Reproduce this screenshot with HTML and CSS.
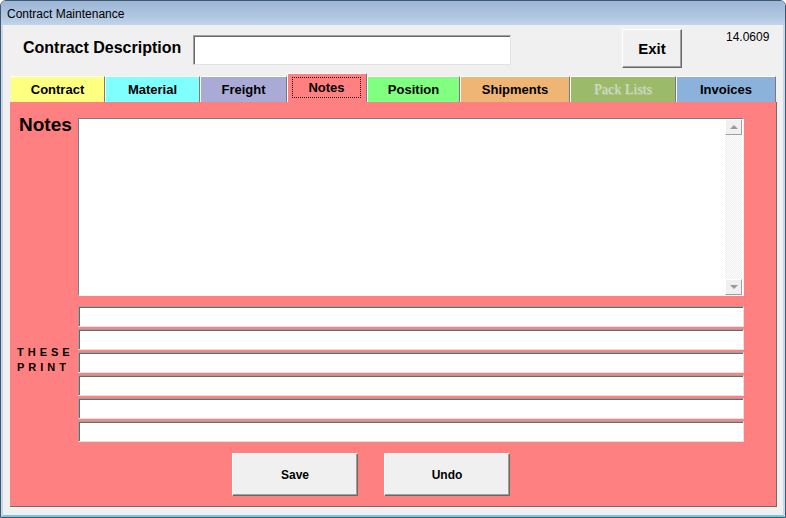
FILE: index.html
```html
<!DOCTYPE html>
<html lang="en">
<head>
  <meta charset="UTF-8" />
  <title>Contract Maintenance</title>
  <link rel="stylesheet" href="styles.css">
</head>
<body>
  <div class="window">
    <div class="titlebar">Contract Maintenance</div>
    <div class="client">
      <div class="header">
        <div class="desc-label">Contract Description</div>
        <div class="field desc-field"></div>
        <button class="btn exit-btn">Exit</button>
        <div class="version">14.0609</div>
      </div>

      <div class="tabs">
        <div class="tab tab-contract">Contract</div>
        <div class="tab tab-material">Material</div>
        <div class="tab tab-freight">Freight</div>
        <div class="tab tab-notes active"><span class="focus">Notes</span></div>
        <div class="tab tab-position">Position</div>
        <div class="tab tab-shipments">Shipments</div>
        <div class="tab tab-pack disabled">Pack Lists</div>
        <div class="tab tab-invoices">Invoices</div>
      </div>

      <div class="panel">
        <div class="notes-label">Notes</div>
        <div class="memo">
          <div class="memo-text"></div>
          <div class="scrollbar">
            <div class="sb-btn up"><span class="arrow"></span></div>
            <div class="sb-track"></div>
            <div class="sb-btn down"><span class="arrow"></span></div>
          </div>
        </div>

        <div class="print-label">THESE<br>PRINT</div>
        <div class="print-lines">
          <div class="field line"></div>
          <div class="field line"></div>
          <div class="field line"></div>
          <div class="field line"></div>
          <div class="field line"></div>
          <div class="field line"></div>
        </div>

        <div class="actions">
          <button class="btn action-btn">Save</button>
          <button class="btn action-btn">Undo</button>
        </div>
      </div>
    </div>
  </div>
</body>
</html>
```

FILE: styles.css
```css
body {
  margin: 0;
  padding: 0;
  background: #ffffff;
  font-family: "Liberation Sans", Arial, sans-serif;
  color: #000;
}

.window {
  width: 786px;
  height: 518px;
  box-sizing: border-box;
  border: 1px solid #43576e;
  border-radius: 6px 6px 0 0;
  overflow: hidden;
  background: #f0f0f0;
  display: flex;
  flex-direction: column;
}

.titlebar {
  height: 24px;
  flex: 0 0 auto;
  box-sizing: border-box;
  padding: 6px 0 0 6px;
  font-size: 12px;
  line-height: 14px;
  background: linear-gradient(#9cb6d6, #b3c8e2 70%, #c2d4ea);
  color: #000;
}

.client {
  flex: 1 1 auto;
  border: 2px solid #c6d8ec;
  border-top: none;
  padding: 0 6px 0 7px;
  background: #f0f0f0;
  border-bottom-color: #6ec9e8;
}

/* top row */
.header {
  height: 48px;
  display: flex;
  align-items: flex-start;
  padding-left: 13px;
}

.desc-label {
  width: 170px;
  margin-top: 13px;
  font-size: 16px;
  line-height: 20px;
  font-weight: bold;
}

.field {
  box-sizing: border-box;
  background: #fff;
  border-top: 1px solid #a0a0a0;
  border-left: 1px solid #a0a0a0;
  border-right: 1px solid #e3e3e3;
  border-bottom: 1px solid #e3e3e3;
  box-shadow: inset 1px 1px 0 #696969;
}

.desc-field {
  width: 318px;
  height: 30px;
  margin-top: 10px;
}

.btn {
  box-sizing: border-box;
  background: #f0f0f0;
  border: 1px solid;
  border-color: #ffffff #696969 #696969 #ffffff;
  box-shadow: inset -1px -1px 0 #a0a0a0;
  font-family: "Liberation Sans", Arial, sans-serif;
  font-weight: bold;
  color: #000;
  padding: 0;
}

.exit-btn {
  width: 60px;
  height: 39px;
  margin: 4px 0 0 111px;
  font-size: 15px;
}

.version {
  margin: 5px 0 0 44px;
  font-size: 12px;
  line-height: 14px;
}

/* tab strip */
.tabs {
  height: 29px;
  display: flex;
  align-items: flex-end;
}

.tab {
  box-sizing: border-box;
  height: 26px;
  border-left: 1px solid #ffffff;
  border-top: 1px solid #ffffff;
  border-right: 1px solid #7a7a7a;
  font-size: 13px;
  font-weight: bold;
  display: flex;
  align-items: center;
  justify-content: center;
}

.tab-contract { width: 95px; background: #ffff80; border-left-color: #f0f0f0; }
.tab-material { width: 95px; background: #80ffff; }
.tab-freight { width: 87px; background: #aaaad6; }
.tab-notes { width: 80px; background: #ff8080; }
.tab-position { width: 93px; background: #80ff80; }
.tab-shipments { width: 110px; background: #eeb574; }
.tab-pack { width: 106px; background: #9bbb6a; }
.tab-invoices { width: 100px; background: #8ab2da; }

.tab.active {
  height: 29px;
  padding: 3px 5px 4px 4px;
  align-items: stretch;
}

.focus {
  flex: 1;
  border: 1px dotted #000;
  display: flex;
  align-items: center;
  justify-content: center;
}

.tab.disabled {
  color: #d4dccb;
  font-family: "Liberation Serif", "Times New Roman", serif;
  font-size: 14px;
  font-weight: normal;
  text-shadow: 1px 1px 0 #b3c896;
}

/* notes page */
.panel {
  box-sizing: border-box;
  height: 405px;
  background: #ff8080;
  border-right: 1px solid #6d6d6d;
  border-bottom: 1px solid #6d6d6d;
  padding: 16px 0 0 0;
  display: grid;
  grid-template-columns: 68px 666px 1fr;
  grid-template-rows: auto auto auto;
  align-content: start;
}

.notes-label {
  grid-column: 1;
  padding-left: 9px;
  margin-top: -4px;
  font-size: 19px;
  line-height: 22px;
  font-weight: bold;
}

.memo {
  grid-column: 2;
  height: 178px;
  box-sizing: border-box;
  background: #fff;
  border-top: 1px solid #72808e;
  border-left: 1px solid #72808e;
  border-right: 1px solid #f4f4f4;
  border-bottom: 1px solid #f4f4f4;
  display: flex;
}

.memo-text {
  flex: 1;
}

.scrollbar {
  width: 17px;
  display: flex;
  flex-direction: column;
  margin-right: 1px;
}

.sb-btn {
  height: 16px;
  box-sizing: border-box;
  background: #f0f0f0;
  border: 1px solid;
  border-color: #ffffff #a0a0a0 #a0a0a0 #ffffff;
  display: flex;
  align-items: center;
  justify-content: center;
}

.sb-track {
  flex: 1;
  background: repeating-conic-gradient(#eeeeee 0 25%, #ffffff 0 50%) 0 0 / 2px 2px;
}

.arrow {
  width: 0;
  height: 0;
  border-left: 4px solid transparent;
  border-right: 4px solid transparent;
}

.up .arrow { border-bottom: 4px solid #9a9a9a; }
.down .arrow { border-top: 4px solid #9a9a9a; }

.print-label {
  grid-column: 1;
  grid-row: 2;
  align-self: start;
  margin-top: 49px;
  padding-left: 7px;
  font-size: 11px;
  line-height: 15px;
  font-weight: bold;
  letter-spacing: 4px;
}

.print-lines {
  grid-column: 2;
  grid-row: 2;
  margin-top: 10px;
  display: flex;
  flex-direction: column;
  gap: 2px;
}

.line {
  height: 21px;
}

.actions {
  grid-column: 1 / -1;
  grid-row: 3;
  margin-top: 11px;
  padding-left: 222px;
  display: flex;
  gap: 26px;
}

.action-btn {
  width: 126px;
  height: 43px;
  font-size: 12px;
}
```
